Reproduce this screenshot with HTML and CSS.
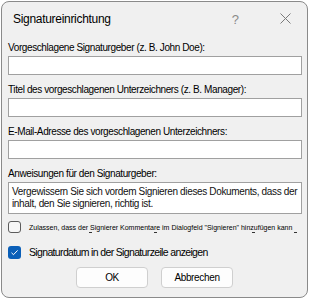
FILE: index.html
```html
<!DOCTYPE html>
<html lang="de">
<head>
<meta charset="utf-8">
<link rel="stylesheet" href="styles.css">
</head>
<body>
<div class="dialog">
  <div class="titlebar">
    <span class="title">Signatureinrichtung</span>
    <span class="help">?</span>
    <svg class="close" width="11" height="11" viewBox="0 0 11 11"><path d="M0.5 0.5L10.5 10.5M10.5 0.5L0.5 10.5" stroke="#7a7a7a" stroke-width="1" fill="none"/></svg>
  </div>
  <div class="content">
    <div class="label">Vorgeschlagene Signaturgeber (z. B. John Doe):</div>
    <div class="input"></div>
    <div class="label">Titel des vorgeschlagenen Unterzeichners (z. B. Manager):</div>
    <div class="input"></div>
    <div class="label">E-Mail-Adresse des vorgeschlagenen Unterzeichners:</div>
    <div class="input"></div>
    <div class="label">Anweisungen für den Signaturgeber:</div>
    <div class="textarea">Vergewissern Sie sich vordem Signieren dieses Dokuments, dass der inhalt, den Sie signieren, richtig ist.</div>
    <div class="check-row small">
      <span class="box"></span>
      <div class="small-text">
        <span>Zulassen, dass der Signierer Kommentare im Dialogfeld "Signieren" hinzufügen kann</span>
        <div class="marks"><i class="m1"></i><i class="m2"></i><i class="m3"></i><i class="m4"></i></div>
      </div>
    </div>
    <div class="check-row second">
      <span class="box checked"><svg width="13" height="13" viewBox="0 0 13 13"><path d="M3.5 6.8L5.5 8.7L9.6 4.4" stroke="#fff" stroke-width="1" fill="none"/></svg></span>
      <span class="check-text">Signaturdatum in der Signaturzeile anzeigen</span>
    </div>
    <div class="buttons">
      <div class="btn">OK</div>
      <div class="btn">Abbrechen</div>
    </div>
  </div>
</div>
</body>
</html>
```
FILE: styles.css
```css
html, body {
  margin: 0;
  padding: 0;
  background: #ffffff;
}
body {
  width: 310px;
  height: 300px;
  font-family: "Liberation Sans", Arial, sans-serif;
  color: #000;
}
.dialog {
  box-sizing: border-box;
  margin: 1px 0 0 1px;
  width: 307px;
  height: 297px;
  border: 1px solid #8a8a8a;
  border-radius: 8px;
  background: #f0f0f0;
  overflow: hidden;
}
.titlebar {
  height: 37px;
  display: flex;
  align-items: flex-start;
  padding: 10px 0 0 11px;
  box-sizing: border-box;
}
.title {
  font-size: 12px;
  line-height: 15px;
  letter-spacing: -0.3px;
  color: #000;
}
.help {
  margin-left: auto;
  font-size: 13px;
  line-height: 15px;
  color: #8a8a8a;
}
.close {
  margin: 1px 16px 0 41px;
}
.content {
  padding: 2px 5px 0 6px;
}
.label {
  font-size: 10px;
  line-height: 13px;
  letter-spacing: -0.4px;
  margin-bottom: 2px;
}
.input {
  box-sizing: border-box;
  height: 19px;
  background: #fff;
  border: 1px solid #a0a0a0;
  margin-bottom: 8px;
}
.textarea {
  box-sizing: border-box;
  height: 32px;
  background: #fff;
  border: 1px solid #a0a0a0;
  padding: 3px 3px;
  font-size: 10px;
  line-height: 12px;
  letter-spacing: -0.35px;
  color: #111;
}
.check-row {
  display: flex;
  align-items: flex-start;
  margin-top: 7px;
}
.box {
  box-sizing: border-box;
  width: 13px;
  height: 12px;
  border: 1px solid #5c5c5c;
  border-radius: 3px;
  background: #f7f7f7;
  flex: none;
  margin-right: 8px;
}
.box.checked {
  height: 13px;
  border: none;
  background: #0a5fb8;
  display: flex;
}
.small-text {
  font-size: 7px;
  line-height: 9px;
  padding-top: 2px;
  width: 266px;
}
.marks {
  position: relative;
  height: 2px;
}
.marks i {
  position: absolute;
  top: 0;
  width: 3px;
  height: 1px;
  background: #333;
}
.marks .m1 { left: 60px; }
.marks .m2 { left: 125px; }
.marks .m3 { left: 223px; }
.marks .m4 { left: 265px; }
.check-text {
  font-size: 10.5px;
  line-height: 13px;
  letter-spacing: -0.65px;
}
.check-row.second {
  margin-top: 12px;
}
.buttons {
  display: flex;
  gap: 13px;
  padding-left: 68px;
  margin-top: 8px;
}
.btn {
  box-sizing: border-box;
  width: 72px;
  height: 21px;
  background: #fdfdfd;
  border: 1px solid #cfcfcf;
  border-radius: 4px;
  font-size: 10px;
  letter-spacing: -0.35px;
  line-height: 19px;
  text-align: center;
}
```
